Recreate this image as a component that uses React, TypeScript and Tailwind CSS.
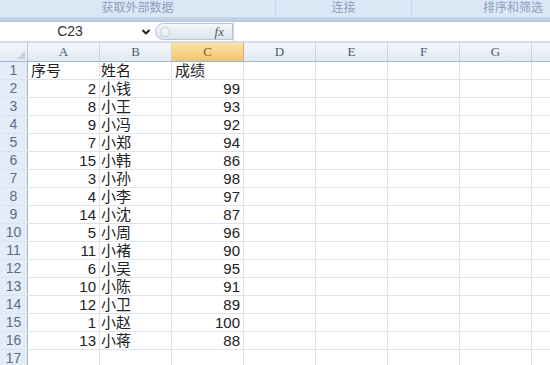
import { ChevronDown } from "lucide-react";

const rows: [string, string, string][] = [
  ["序号", "姓名", "成绩"],
  ["2", "小钱", "99"],
  ["8", "小王", "93"],
  ["9", "小冯", "92"],
  ["7", "小郑", "94"],
  ["15", "小韩", "86"],
  ["3", "小孙", "98"],
  ["4", "小李", "97"],
  ["14", "小沈", "87"],
  ["5", "小周", "96"],
  ["11", "小褚", "90"],
  ["6", "小吴", "95"],
  ["10", "小陈", "91"],
  ["12", "小卫", "89"],
  ["1", "小赵", "100"],
  ["13", "小蒋", "88"],
  ["", "", ""],
];

const cols = ["A", "B", "C", "D", "E", "F", "G"];
const cjk = { fontFamily: '"Liberation Sans", "Noto Sans CJK SC", sans-serif' };

export default function App() {
  return (
    <div className="w-[550px] h-[365px] overflow-hidden bg-white" style={cjk}>
      {/* ribbon group labels */}
      <div className="flex h-[17px] bg-[#dce7f5] text-[12px] leading-[17px] text-[#8aa0c0]">
        <div className="w-[276px] text-center border-r border-[#c5d5ea]">获取外部数据</div>
        <div className="w-[136px] text-center border-r border-[#c5d5ea]">连接</div>
        <div className="flex-1 text-right pr-[7px]">排序和筛选</div>
      </div>
      <div className="h-[5px] bg-gradient-to-b from-[#c9d7ea] to-[#b4c6de]" />

      {/* formula bar */}
      <div className="flex h-[19px] items-center bg-white">
        <div className="w-[140px] text-center text-[14px] text-[#333]">C23</div>
        <ChevronDown className="w-3 h-3 text-[#222]" strokeWidth={4} />
        <div className="ml-[3px] flex h-[17px] w-[78px] items-center justify-between rounded-l-full border border-[#b7c4d6] bg-gradient-to-b from-[#f4f7fb] to-[#dce4ee] pl-[4px] pr-[8px]">
          <div className="w-[10px] h-[10px] rounded-full border border-[#c3ccd8] bg-[#eef2f7]" />
          <span className="text-[13px] italic text-[#555]" style={{ fontFamily: '"Liberation Serif", serif' }}>fx</span>
        </div>
        <div className="flex-1 h-full border-l border-[#c9d3df]" />
      </div>

      {/* column header */}
      <div className="flex h-[21px] border-t-[2px] border-[#d3dce8] bg-gradient-to-b from-[#f3f6fb] to-[#e2e9f3] border-b border-b-[#9eb6ce]">
        <div className="w-[28px] shrink-0 border-r border-[#b9c9dc] flex items-end justify-end p-[2px]">
          <div className="w-0 h-0 border-l-[8px] border-l-transparent border-b-[8px] border-b-[#c3cfdd]" />
        </div>
        {cols.map((c) => (
          <div
            key={c}
            className={`w-[72px] shrink-0 flex items-center justify-center border-r text-[13px] ${
              c === "C"
                ? "bg-gradient-to-b from-[#fbe2a8] to-[#f6c46e] border-[#e5ad57] text-[#7a5a2a]"
                : "border-[#c5d2e2] text-[#4b5a70]"
            }`}
            style={{ fontFamily: '"Liberation Serif", serif' }}
          >
            {c}
          </div>
        ))}
        <div className="flex-1" />
      </div>

      {/* rows */}
      {rows.map((r, i) => (
        <div key={i} className="flex h-[18px] border-b border-[#dde3ea] text-[15px] leading-[17px] text-[#222]">
          <div className="w-[28px] shrink-0 bg-[#e4ecf7] border-r border-[#9eb6ce] text-center text-[14px] text-[#5d6d85]">
            {i + 1}
          </div>
          <div className={`w-[72px] shrink-0 border-r border-[#dde3ea] px-[3px] ${i === 0 ? "text-left" : "text-right"}`}>
            {r[0]}
          </div>
          <div className="w-[72px] shrink-0 border-r border-[#dde3ea] px-[1px]">{r[1]}</div>
          <div className={`w-[72px] shrink-0 border-r border-[#dde3ea] px-[3px] ${i === 0 ? "text-left" : "text-right"}`}>
            {r[2]}
          </div>
          {[0, 1, 2, 3].map((k) => (
            <div key={k} className="w-[72px] shrink-0 border-r border-[#dde3ea]" />
          ))}
          <div className="flex-1" />
        </div>
      ))}
    </div>
  );
}
